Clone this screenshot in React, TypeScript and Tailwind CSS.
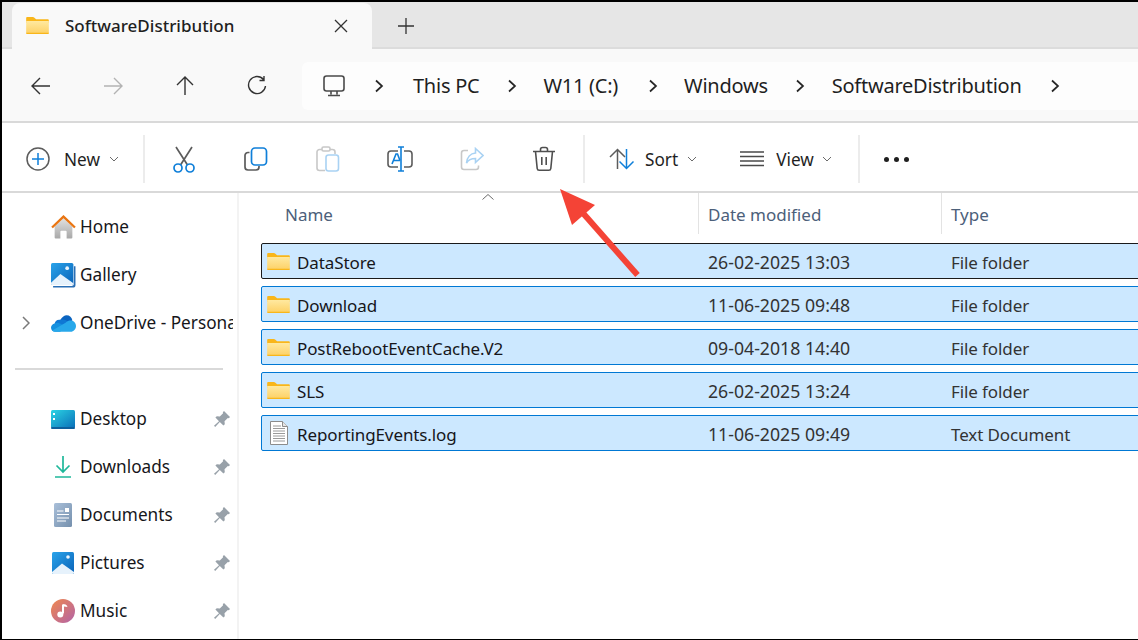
import React from "react";

const FONT = "font-['Noto_Sans','Open_Sans',sans-serif]";

function Folder({ className = "" }: { className?: string }) {
  return (
    <svg viewBox="0 0 24 18" className={className}>
      <defs>
        <linearGradient id="fg" x1="0" y1="0" x2="0" y2="1">
          <stop offset="0" stopColor="#ffe9a0" />
          <stop offset="1" stopColor="#fdd064" />
        </linearGradient>
      </defs>
      <path d="M0 1.200C0 .5.5 0 1.200 0h6c.5 0 .9.2 1.200.5L10.500 2.500H23c.6 0 1 .4 1 1V6H0z" fill="#f9b61a" />
      <path d="M0 4.200h24V17c0 .6-.4 1-1 1H1c-.6 0-1-.4-1-1z" fill="url(#fg)" />
      <path d="M0 16.800h24V17c0 .6-.4 1-1 1H1c-.6 0-1-.4-1-1z" fill="#f9b61a" />
    </svg>
  );
}

function TextDoc({ className = "" }: { className?: string }) {
  return (
    <svg viewBox="0 0 18 24" className={className} fill="none">
      <path d="M.5.5h12l5 5v18H.5z" fill="#fff" stroke="#8c8c8c" />
      <path d="M12.500.5v5h5" fill="#e6e6e6" stroke="#8c8c8c" />
      <path d="M3 5h8M3 7.500h12M3 10h12M3 12.500h12M3 15h12M3 17.500h12M3 20h12" stroke="#9a9a9a" />
    </svg>
  );
}

function Chev({ className = "" }: { className?: string }) {
  return (
    <svg viewBox="0 0 10 6" className={className} fill="none" stroke="#6b6b6b" strokeWidth="1">
      <path d="M1 1l4 4 4-4" />
    </svg>
  );
}

function Crumb() {
  return (
    <svg viewBox="0 0 10 14" className="w-[10px] h-[14px]" fill="none" stroke="#262626" strokeWidth="1.700">
      <path d="M2 1.500L8 7l-6 5.500" />
    </svg>
  );
}

function Nav({ d, color = "#333" }: { d: string; color?: string }) {
  return (
    <div className="w-[72px] flex justify-center">
      <svg viewBox="0 0 22 22" className="w-[22px] h-[22px]" fill="none" stroke={color} strokeWidth="1.400">
        <path d={d} />
      </svg>
    </div>
  );
}

const GREY = "#5c5c5c";
const BLUE = "#0f7fd9";

function Scissors() {
  return (
    <svg viewBox="0 0 24 28" className="w-[24px] h-[28px]" fill="none" strokeWidth="1.700">
      <path d="M4 2l11.500 18M20 2L8.500 20" stroke={GREY} />
      <circle cx="6" cy="23" r="4" stroke={BLUE} />
      <circle cx="18" cy="23" r="4" stroke={BLUE} />
    </svg>
  );
}
function Copy() {
  return (
    <svg viewBox="0 0 24 24" className="w-[24px] h-[24px]" fill="none" strokeWidth="1.700">
      <path d="M5.500 5.500H4a3 3 0 0 0-3 3V20a3 3 0 0 0 3 3h8a3 3 0 0 0 3-3v-1" stroke={GREY} />
      <rect x="7.500" y="1" width="15" height="17" rx="3.500" stroke={BLUE} />
    </svg>
  );
}
function Paste() {
  return (
    <svg viewBox="0 0 24 26" className="w-[24px] h-[26px]" fill="none" strokeWidth="1.600">
      <path d="M9 24.500H3.500A2.500 2.500 0 0 1 1 22V6a2.500 2.500 0 0 1 2.500-2.500H6M14 3.500h2.500A2.500 2.500 0 0 1 19 6v2" stroke="#c8c8c8" />
      <rect x="6" y="1" width="8" height="4" rx="1.500" stroke="#c8c8c8" />
      <rect x="10" y="9" width="12.500" height="16" rx="2.500" stroke="#a9d2f3" />
    </svg>
  );
}
function Rename() {
  return (
    <svg viewBox="0 0 26 26" className="w-[26px] h-[26px]" fill="none" strokeWidth="1.600">
      <path d="M11 5H4a3 3 0 0 0-3 3v10a3 3 0 0 0 3 3h7M17 5h5a3 3 0 0 1 3 3v10a3 3 0 0 1-3 3h-5" stroke={GREY} />
      <path d="M11 1h6M14 1v24M11 25h6" stroke={BLUE} />
      <path d="M5 18l4-10h1.500l2.500 6.500M6.500 14.500H13" stroke={BLUE} />
    </svg>
  );
}
function Share() {
  return (
    <svg viewBox="0 0 24 24" className="w-[24px] h-[24px]" fill="none" strokeWidth="1.600">
      <path d="M8 3.500H4A2.500 2.500 0 0 0 1.500 6v14A2.500 2.500 0 0 0 4 22.500h12a2.500 2.500 0 0 0 2.500-2.500v-1.500" stroke="#c8c8c8" />
      <path d="M15.500 1.500l7.500 7-7.500 7v-4c-4 0-7 1-9 4.500 .5-5.500 4-9.500 9-10z" stroke="#a9d2f3" />
    </svg>
  );
}
function Trash() {
  return (
    <svg viewBox="0 0 24 26" className="w-[24px] h-[26px]" fill="none" stroke="#4f4f4f" strokeWidth="1.600">
      <path d="M1 5.500h22M8.500 5.500V3.500A2 2 0 0 1 10.500 1.500h3a2 2 0 0 1 2 2v2" />
      <path d="M3.500 5.500l1.700 17a2 2 0 0 0 2 1.800h9.600a2 2 0 0 0 2-1.800l1.700-17" />
      <path d="M9.800 11v8M14.200 11v8" />
    </svg>
  );
}
function Sort() {
  return (
    <svg viewBox="0 0 26 22" className="w-[26px] h-[22px]" fill="none" strokeWidth="1.500">
      <path d="M8.500 21V1.500M1 9l7.500-7.500L16 9" stroke={GREY} />
      <path d="M17.500 1v19.500M10.500 13.500l7 7 7-7" stroke={BLUE} />
    </svg>
  );
}
function ViewIcon() {
  return (
    <svg viewBox="0 0 24 16" className="w-[24px] h-[16px]" fill="none" stroke="#4a4a4a" strokeWidth="1.300">
      <path d="M0 1h24M0 5.500h24M0 10h24M0 14.500h24" />
    </svg>
  );
}

const ToolIcon = ({ children }: { children: React.ReactNode }) => (
  <div className="w-[72px] flex justify-center items-center">{children}</div>
);
const Sep = () => <div className="w-[2px] h-[48px] bg-[#ececec]" />;

function Home() {
  return (
    <svg viewBox="0 0 24 24" className="w-[25px] h-[25px]">
      <defs>
        <linearGradient id="hb" x1="0" y1="0" x2="0" y2="1">
          <stop offset="0" stopColor="#e2e2e2" />
          <stop offset="1" stopColor="#a8a8a8" />
        </linearGradient>
      </defs>
      <path d="M3.500 11L12 3l8.500 8v10.500a1 1 0 0 1-1 1H15V16a1 1 0 0 0-1-1h-4a1 1 0 0 0-1 1v6.500H4.500a1 1 0 0 1-1-1z" fill="url(#hb)" />
      <path d="M1 12L12 1.500 23 12" fill="none" stroke="#e97512" strokeWidth="2.200" />
    </svg>
  );
}
function Gallery() {
  return (
    <svg viewBox="0 0 24 24" className="w-[25px] h-[25px]">
      <defs>
        <linearGradient id="gl" x1="0" y1="0" x2="1" y2="1">
          <stop offset="0" stopColor="#29a3ea" />
          <stop offset="1" stopColor="#0a63b8" />
        </linearGradient>
      </defs>
      <path d="M22 3v17a2 2 0 0 1-2 2H2v1.500h19a2.500 2.500 0 0 0 2.500-2.500V3z" fill="#2a6fb5" />
      <rect x="0" y="0" width="21.500" height="21" rx="1.500" fill="url(#gl)" />
      <circle cx="15.500" cy="5" r="1.800" fill="#e8f4fd" />
      <path d="M0 19l9-8.500 12.500 9v.5a1 1 0 0 1-1 1H1a1 1 0 0 1-1-1z" fill="#e6f2fc" />
    </svg>
  );
}
function OneDrive() {
  return (
    <svg viewBox="0 0 24 16" className="w-[25px] h-[17px]">
      <path d="M9 4.500C10.500 1.500 13 0 15 0c2.800 0 5 2 5.500 5L9 11z" fill="#0a64c0" />
      <path d="M9 4.500C6 3.800 3.500 6 3.500 8.500L8 14l9-7c-2-2.300-5-3.500-8-2.500z" fill="#0f78d4" />
      <path d="M3.500 8C1.500 8.200 0 10 0 12c0 2.200 1.800 4 4 4h5L13 10 7.500 7.500C6 7 4.800 7.500 3.500 8z" fill="#1490df" />
      <path d="M14 7.200c2-2.200 5-2.400 6.500-1.800 2 .6 3.500 2.600 3.500 5 0 3-2.400 5.600-5 5.600H4c-1 0-2-.4-2.800-1.200z" fill="#28a8ea" />
    </svg>
  );
}
function Desktop() {
  return (
    <svg viewBox="0 0 24 19" className="w-[24px] h-[19px]">
      <defs>
        <linearGradient id="dk" x1="0" y1="0" x2="1" y2="1">
          <stop offset="0" stopColor="#2bd4e4" />
          <stop offset="1" stopColor="#0a6fb8" />
        </linearGradient>
      </defs>
      <rect width="24" height="18" rx="1.500" fill="url(#dk)" />
      <rect y="17" width="24" height="2" rx="1" fill="#0d5f9c" />
      <rect x="2" y="3" width="2" height="2" fill="#fff" />
      <rect x="2" y="8" width="2" height="2" fill="#fff" />
    </svg>
  );
}
function Download() {
  return (
    <svg viewBox="0 0 16 22" className="w-[16px] h-[22px]" fill="none" stroke="#1fb89a" strokeWidth="1.700">
      <path d="M8 0v16M1.500 9.500L8 16l6.500-6.500M0 21h16" />
    </svg>
  );
}
function Documents() {
  return (
    <svg viewBox="0 0 18 24" className="w-[18px] h-[24px]">
      <defs>
        <linearGradient id="dc" x1="0" y1="0" x2="1" y2="1">
          <stop offset="0" stopColor="#a9bfd9" />
          <stop offset="1" stopColor="#7590ad" />
        </linearGradient>
      </defs>
      <rect width="18" height="24" rx="1.500" fill="url(#dc)" />
      <path d="M3 8h6.500M3 11.500h12M3 15h12M3 18h9" stroke="#fff" strokeWidth="1.200" />
      <rect x="11" y="5" width="4" height="4" fill="#fff" />
    </svg>
  );
}
function Pictures() {
  return (
    <svg viewBox="0 0 22 22" className="w-[22px] h-[22px]">
      <defs>
        <linearGradient id="pc" x1="0" y1="0" x2="1" y2="1">
          <stop offset="0" stopColor="#29a3ea" />
          <stop offset="1" stopColor="#0a63b8" />
        </linearGradient>
      </defs>
      <rect width="22" height="22" rx="1.500" fill="url(#pc)" />
      <circle cx="16" cy="5" r="1.800" fill="#eaf5fd" />
      <path d="M0 20l10-8.500L22 20v.5a1.500 1.500 0 0 1-1.500 1.500h-19A1.500 1.500 0 0 1 0 20.500z" fill="#e6f2fc" />
    </svg>
  );
}
function Music() {
  return (
    <svg viewBox="0 0 24 24" className="w-[24px] h-[24px]">
      <defs>
        <linearGradient id="mu" x1="0" y1="0" x2="1" y2="1">
          <stop offset="0" stopColor="#f0884e" />
          <stop offset="1" stopColor="#b263a8" />
        </linearGradient>
      </defs>
      <circle cx="12" cy="12" r="12" fill="url(#mu)" />
      <path d="M12 5.500v9" stroke="#fff" strokeWidth="2" />
      <path d="M12 5c1.500 0 4 .6 4.500 3L13 7.500z" fill="#fff" />
      <circle cx="9.300" cy="15.500" r="3" fill="#fff" />
    </svg>
  );
}
function Pin() {
  return (
    <svg viewBox="0 0 16 16" className="w-[16px] h-[16px]" fill="#98a1a9">
      <path d="M10 0l6 6-1.200 1.200-1-.3-3.300 3.300.3 3L9.400 14.600 5.800 11 1.200 16 0 14.800 5 10.200 1.400 6.600l1.400-1.400 3 .3L9.100 2.200l-.3-1z" />
    </svg>
  );
}

const top = [
  { label: "Home", icon: <Home /> },
  { label: "Gallery", icon: <Gallery /> },
  { label: "OneDrive - Personal", icon: <OneDrive />, chev: true },
];
const pinned = [
  { label: "Desktop", icon: <Desktop /> },
  { label: "Downloads", icon: <Download /> },
  { label: "Documents", icon: <Documents /> },
  { label: "Pictures", icon: <Pictures /> },
  { label: "Music", icon: <Music /> },
];
const rows = [
  ["DataStore", "26-02-2025 13:03", "File folder"],
  ["Download", "11-06-2025 09:48", "File folder"],
  ["PostRebootEventCache.V2", "09-04-2018 14:40", "File folder"],
  ["SLS", "26-02-2025 13:24", "File folder"],
  ["ReportingEvents.log", "11-06-2025 09:49", "Text Document"],
];

function SideRow({ label, icon, chev, pin }: { label: string; icon: React.ReactNode; chev?: boolean; pin?: boolean }) {
  return (
    <div className="h-12 flex items-center overflow-hidden">
      <div className="w-[48px] shrink-0 flex justify-center">
        {chev && (
          <svg viewBox="0 0 8 14" className="w-[8px] h-[14px]" fill="none" stroke="#7a7a7a" strokeWidth="1.500">
            <path d="M1 1l6 6-6 6" />
          </svg>
        )}
      </div>
      <div className="w-[26px] shrink-0 flex justify-center">{icon}</div>
      <span className="ml-[4px] text-[17.2px] leading-none whitespace-nowrap text-[#16161a] flex-1">{label}</span>
      {pin && <div className="shrink-0 mr-[3px]"><Pin /></div>}
    </div>
  );
}

export default function App() {
  return (
    <div className={`${FONT} relative w-[1138px] h-[640px] overflow-hidden bg-white border-t-2 border-l-2 border-b border-black box-border flex flex-col`}>
      {/* tab strip */}
      <div className="h-[47px] shrink-0 bg-[#e6e6e6] border-b-2 border-[#dcdcdc] flex items-start pl-[10px]">
        <div className="relative z-10 mt-px h-[46px] w-[360px] shrink-0 bg-[#f9f9f9] rounded-t-[8px] flex items-center pl-[14px]">
          <Folder className="w-[23px] h-[17px] -mt-[2px]" />
          <span className="ml-[16px] text-[17px] font-medium leading-none text-[#1f1f1f] -mt-[1px]">SoftwareDistribution</span>
          <svg viewBox="0 0 14 14" className="ml-auto mr-[24px] w-[14px] h-[14px]" fill="none" stroke="#333" strokeWidth="1.300">
            <path d="M1 1l12 12M13 1L1 13" />
          </svg>
        </div>
        <svg viewBox="0 0 16 16" className="ml-[26px] mt-[16px] w-[16px] h-[16px]" fill="none" stroke="#333" strokeWidth="1.300">
          <path d="M8 0v16M0 8h16" />
        </svg>
      </div>

      {/* address row */}
      <div className="h-[74px] shrink-0 bg-[#f9f9f9] border-b-2 border-[#d9d9d9] flex items-center pt-[2px]">
        <div className="w-[300px] shrink-0 flex pl-[3px]">
          <Nav d="M20 11H2M10 3l-8 8 8 8" />
          <Nav d="M2 11h18M12 3l8 8-8 8" color="#b3b3b3" />
          <Nav d="M11 20V2M3 10l8-8 8 8" />
          <Nav d="M17.500 4.500A8.500 8.500 0 1 0 19.500 11M18 1v4.500h-4.500" />
        </div>
        <div className="flex-1 h-[48px] bg-[#fdfdfd] rounded-l-[6px] flex items-center text-[20px] tracking-[-0.25px] text-[#1f1f1f] leading-none">
          <svg viewBox="0 0 22 22" className="ml-[21px] w-[22px] h-[22px]" fill="none" stroke="#4a4a4a" strokeWidth="1.600">
            <rect x="1" y="1" width="20" height="15" rx="2.500" />
            <path d="M8 16v3.500M14 16v3.500M5 20.500h12" />
          </svg>
          <span className="ml-[29px] mr-[29px] flex"><Crumb /></span>
          <span>This PC</span>
          <span className="ml-[28px] mr-[26px] flex"><Crumb /></span>
          <span>W11 (C:)</span>
          <span className="ml-[30px] mr-[26px] flex"><Crumb /></span>
          <span>Windows</span>
          <span className="ml-[27px] mr-[27px] flex"><Crumb /></span>
          <span>SoftwareDistribution</span>
          <span className="ml-[28px] flex"><Crumb /></span>
        </div>
      </div>

      {/* toolbar */}
      <div className="h-[70px] shrink-0 bg-white border-b-2 border-[#d9d9d9] flex items-center pt-[4px] text-[17.2px] text-[#1f1f1f] leading-none">
        <div className="w-[141px] shrink-0 flex items-center pl-[24px]">
          <svg viewBox="0 0 24 24" className="w-[24px] h-[24px]" fill="none" strokeWidth="1.500">
            <circle cx="12" cy="12" r="11" stroke={GREY} />
            <path d="M12 6v12M6 12h12" stroke={BLUE} />
          </svg>
          <span className="ml-[14px] pt-[2px]">New</span>
          <Chev className="ml-[9px] w-[10px] h-[6px]" />
        </div>
        <Sep />
        <div className="w-[3px]" />
        <ToolIcon><Scissors /></ToolIcon>
        <ToolIcon><Copy /></ToolIcon>
        <ToolIcon><Paste /></ToolIcon>
        <ToolIcon><Rename /></ToolIcon>
        <ToolIcon><Share /></ToolIcon>
        <ToolIcon><Trash /></ToolIcon>
        <div className="w-[3px]" />
        <Sep />
        <div className="w-[24px]" />
        <Sort />
        <span className="ml-[10px] pt-[2px]">Sort</span>
        <Chev className="ml-[9px] w-[10px] h-[6px]" />
        <div className="w-[43px]" />
        <ViewIcon />
        <span className="ml-[12px] pt-[2px]">View</span>
        <Chev className="ml-[8px] w-[10px] h-[6px]" />
        <div className="w-[26px]" />
        <Sep />
        <div className="ml-[24px] flex gap-[5px]">
          <div className="w-[5px] h-[5px] rounded-full bg-[#1f1f1f]" />
          <div className="w-[5px] h-[5px] rounded-full bg-[#1f1f1f]" />
          <div className="w-[5px] h-[5px] rounded-full bg-[#1f1f1f]" />
        </div>
      </div>

      {/* body */}
      <div className="flex flex-1 min-h-0">
        <div className="w-[237px] shrink-0 border-r-2 border-[#f3f3f3] pt-[10px] pr-[4px] overflow-hidden">
          {top.map((r) => <SideRow key={r.label} {...r} />)}
          <div className="mt-[21px] ml-[13px] w-[208px] h-[2px] bg-[#d9d9d9]" />
          <div className="h-[25px]" />
          {pinned.map((r) => <SideRow key={r.label} {...r} pin />)}
        </div>
        <div className="flex-1 min-w-0 relative overflow-hidden">
          <div className="h-[41px] flex text-[17px] leading-none text-[#4c607a]">
            <div className="w-[460px] pl-[46px] pt-[2px] flex items-center border-r border-[#e3e3e3]">Name</div>
            <div className="w-[243px] pl-[9px] pt-[2px] flex items-center border-r border-[#e3e3e3]">Date modified</div>
            <div className="pl-[9px] pt-[2px] flex items-center">Type</div>
          </div>
          <svg viewBox="0 0 12 6" className="absolute left-[243px] top-[1px] w-[12px] h-[6px]" fill="none" stroke="#6b6b6b">
            <path d="M.5 5.500L6 .5l5.500 5" />
          </svg>
          <div className="pl-[22px] -mr-[4px] pt-[9px] flex flex-col gap-[7px]">
            {rows.map((r, i) => (
              <div
                key={r[0]}
                className={`h-[36px] rounded-[2px] box-border border bg-[#cce8ff] flex items-center text-[17px] leading-none text-[#16161a] ${i === 0 ? "border-[#1a1a1a]" : "border-[#0078d4]"}`}
              >
                <div className="w-[446px] shrink-0 flex items-center pl-[5px]">
                  <div className="w-[23px] flex justify-center">
                    {i === 4 ? <TextDoc className="w-[18px] h-[24px]" /> : <Folder className="w-[23px] h-[17px]" />}
                  </div>
                  <span className="ml-[7px] pt-[3px] tracking-[-0.1px]">{r[0]}</span>
                </div>
                <div className="w-[243px] shrink-0 pt-[4px] text-[17.7px] text-[#333]">{r[1]}</div>
                <div className="pt-[3px] text-[#333] whitespace-nowrap tracking-[-0.1px]">{r[2]}</div>
              </div>
            ))}
          </div>
        </div>
      </div>

      {/* annotation arrow */}
      <svg className="absolute left-[546px] top-[178px] w-[100px] h-[105px] z-20" viewBox="548 180 100 105">
        <path d="M637.500 275L582 212" stroke="#f44336" strokeWidth="6" fill="none" />
        <path d="M560 189L595 205 572 225z" fill="#f44336" />
      </svg>
    </div>
  );
}
